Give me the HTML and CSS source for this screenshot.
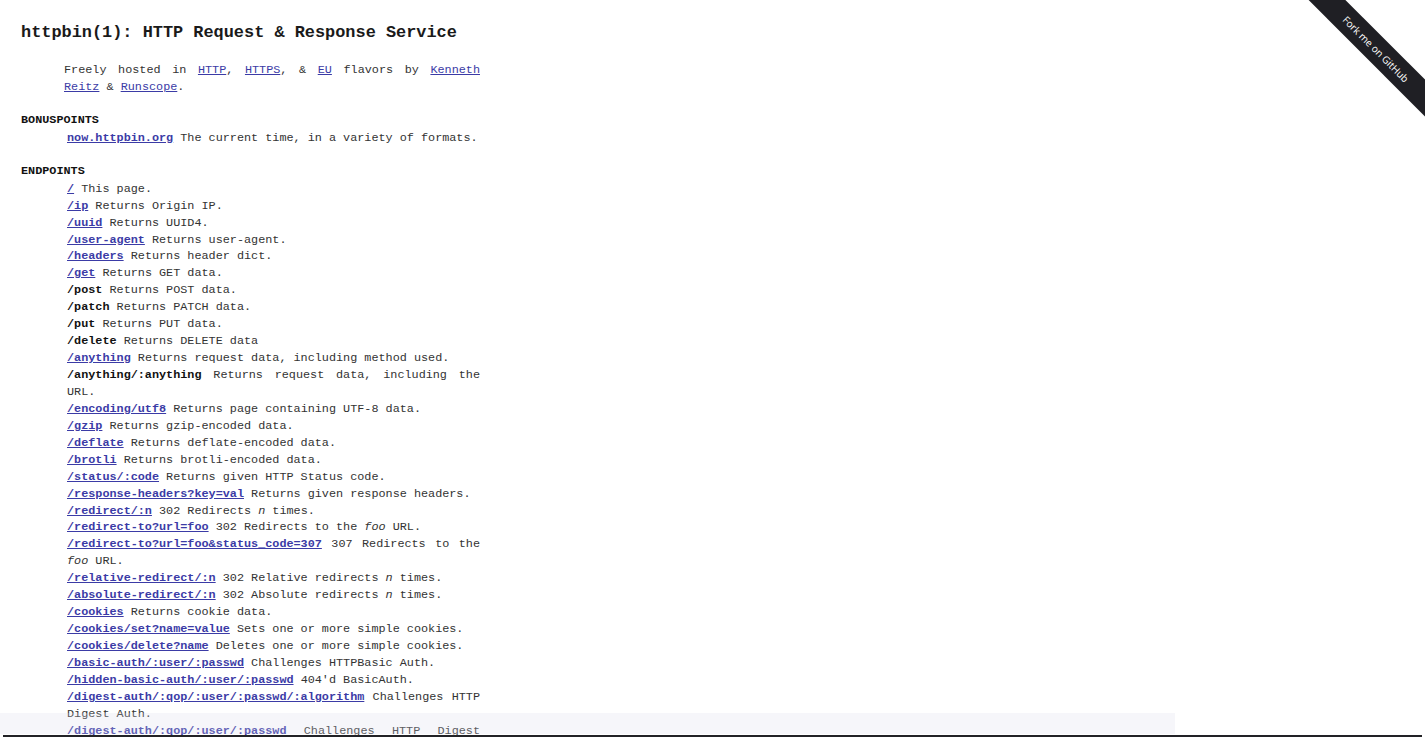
FILE: index.html
```html
<!DOCTYPE html>
<html lang="en">
<head>
<meta charset="utf-8">
<title>httpbin(1): HTTP Client Testing Service</title>
<link rel="stylesheet" href="styles.css">
</head>
<body>
<div class="page">
  <h1 class="title">httpbin(1): HTTP Request &amp; Response Service</h1>
  <p class="intro">Freely hosted in <a href="#">HTTP</a>, <a href="#">HTTPS</a>, &amp; <a href="#">EU</a> flavors by <a href="#">Kenneth Reitz</a> &amp; <a href="#">Runscope</a>.</p>

  <h2 class="section">BONUSPOINTS</h2>
  <ul class="items">
    <li><a class="ep" href="#">now.httpbin.org</a> The current time, in a variety of formats.</li>
  </ul>

  <h2 class="section">ENDPOINTS</h2>
  <ul class="items">
    <li><a class="ep" href="#">/</a> This page.</li>
    <li><a class="ep" href="#">/ip</a> Returns Origin IP.</li>
    <li><a class="ep" href="#">/uuid</a> Returns UUID4.</li>
    <li><a class="ep" href="#">/user-agent</a> Returns user-agent.</li>
    <li><a class="ep" href="#">/headers</a> Returns header dict.</li>
    <li><a class="ep" href="#">/get</a> Returns GET data.</li>
    <li><code class="cmd">/post</code> Returns POST data.</li>
    <li><code class="cmd">/patch</code> Returns PATCH data.</li>
    <li><code class="cmd">/put</code> Returns PUT data.</li>
    <li><code class="cmd">/delete</code> Returns DELETE data</li>
    <li><a class="ep" href="#">/anything</a> Returns request data, including method used.</li>
    <li><code class="cmd">/anything/:anything</code> Returns request data, including the URL.</li>
    <li><a class="ep" href="#">/encoding/utf8</a> Returns page containing UTF-8 data.</li>
    <li><a class="ep" href="#">/gzip</a> Returns gzip-encoded data.</li>
    <li><a class="ep" href="#">/deflate</a> Returns deflate-encoded data.</li>
    <li><a class="ep" href="#">/brotli</a> Returns brotli-encoded data.</li>
    <li><a class="ep" href="#">/status/:code</a> Returns given HTTP Status code.</li>
    <li><a class="ep" href="#">/response-headers?key=val</a> Returns given response headers.</li>
    <li><a class="ep" href="#">/redirect/:n</a> 302 Redirects <em>n</em> times.</li>
    <li><a class="ep" href="#">/redirect-to?url=foo</a> 302 Redirects to the <em>foo</em> URL.</li>
    <li><a class="ep" href="#">/redirect-to?url=foo&amp;status_code=307</a> 307 Redirects to the <em>foo</em> URL.</li>
    <li><a class="ep" href="#">/relative-redirect/:n</a> 302 Relative redirects <em>n</em> times.</li>
    <li><a class="ep" href="#">/absolute-redirect/:n</a> 302 Absolute redirects <em>n</em> times.</li>
    <li><a class="ep" href="#">/cookies</a> Returns cookie data.</li>
    <li><a class="ep" href="#">/cookies/set?name=value</a> Sets one or more simple cookies.</li>
    <li><a class="ep" href="#">/cookies/delete?name</a> Deletes one or more simple cookies.</li>
    <li><a class="ep" href="#">/basic-auth/:user/:passwd</a> Challenges HTTPBasic Auth.</li>
    <li><a class="ep" href="#">/hidden-basic-auth/:user/:passwd</a> 404'd BasicAuth.</li>
    <li><a class="ep" href="#">/digest-auth/:qop/:user/:passwd/:algorithm</a> Challenges HTTP Digest Auth.</li>
    <li><a class="ep" href="#">/digest-auth/:qop/:user/:passwd</a> Challenges HTTP Digest Auth.</li>
  </ul>
</div>

<div class="ribbon-wrap">
  <a class="ribbon" href="#">Fork me on GitHub</a>
</div>

<div class="bottom-shade"></div>
<div class="bottom-line"></div>
</body>
</html>
```

FILE: styles.css
```css
html, body {
  height: 100%;
  overflow: hidden;
}

body {
  margin: 0;
  background: #ffffff;
  color: #333333;
  font-family: "Liberation Mono", "Courier New", monospace;
  font-size: 11.8px;
  line-height: 16.94px;
}

.page {
  padding: 23px 0 0 21px;
}

.title {
  margin: 0;
  font-size: 16.9px;
  line-height: 20px;
  font-weight: bold;
  color: #1a1a1a;
}

.intro {
  width: 416px;
  margin: 19px 0 0 43px;
  text-align: justify;
}

.intro a {
  color: #3b3ba6;
  text-decoration: underline;
}

.section {
  margin: 16px 0 0 0;
  font-size: 11.8px;
  line-height: 16.94px;
  font-weight: bold;
  color: #111111;
}

.items {
  list-style: none;
  margin: 1px 0 0 46px;
  padding: 0;
  width: 413px;
}

.items li {
  text-align: justify;
}

.ep {
  color: #3b3ba6;
  font-weight: bold;
  text-decoration: underline;
}

.cmd {
  font-family: inherit;
  font-size: inherit;
  font-weight: bold;
  color: #111111;
}

.items em {
  font-style: italic;
}

.ribbon-wrap {
  position: absolute;
  top: 0;
  right: 0;
  width: 120px;
  height: 120px;
  overflow: hidden;
}

.ribbon {
  position: absolute;
  left: -29px;
  top: 36px;
  width: 200px;
  height: 26px;
  line-height: 26px;
  background: #1f1f24;
  color: #ffffff;
  text-align: center;
  text-decoration: none;
  font-family: "Open Sans", "Liberation Sans", sans-serif;
  font-size: 10px;
  transform: rotate(45deg);
}

.bottom-shade {
  position: fixed;
  left: 0;
  bottom: 6px;
  width: 1175px;
  height: 21px;
  background: rgba(220, 220, 236, 0.25);
  pointer-events: none;
}

.bottom-line {
  position: fixed;
  left: 3px;
  right: 3px;
  bottom: 3px;
  height: 2px;
  background: #222226;
  pointer-events: none;
}
```
